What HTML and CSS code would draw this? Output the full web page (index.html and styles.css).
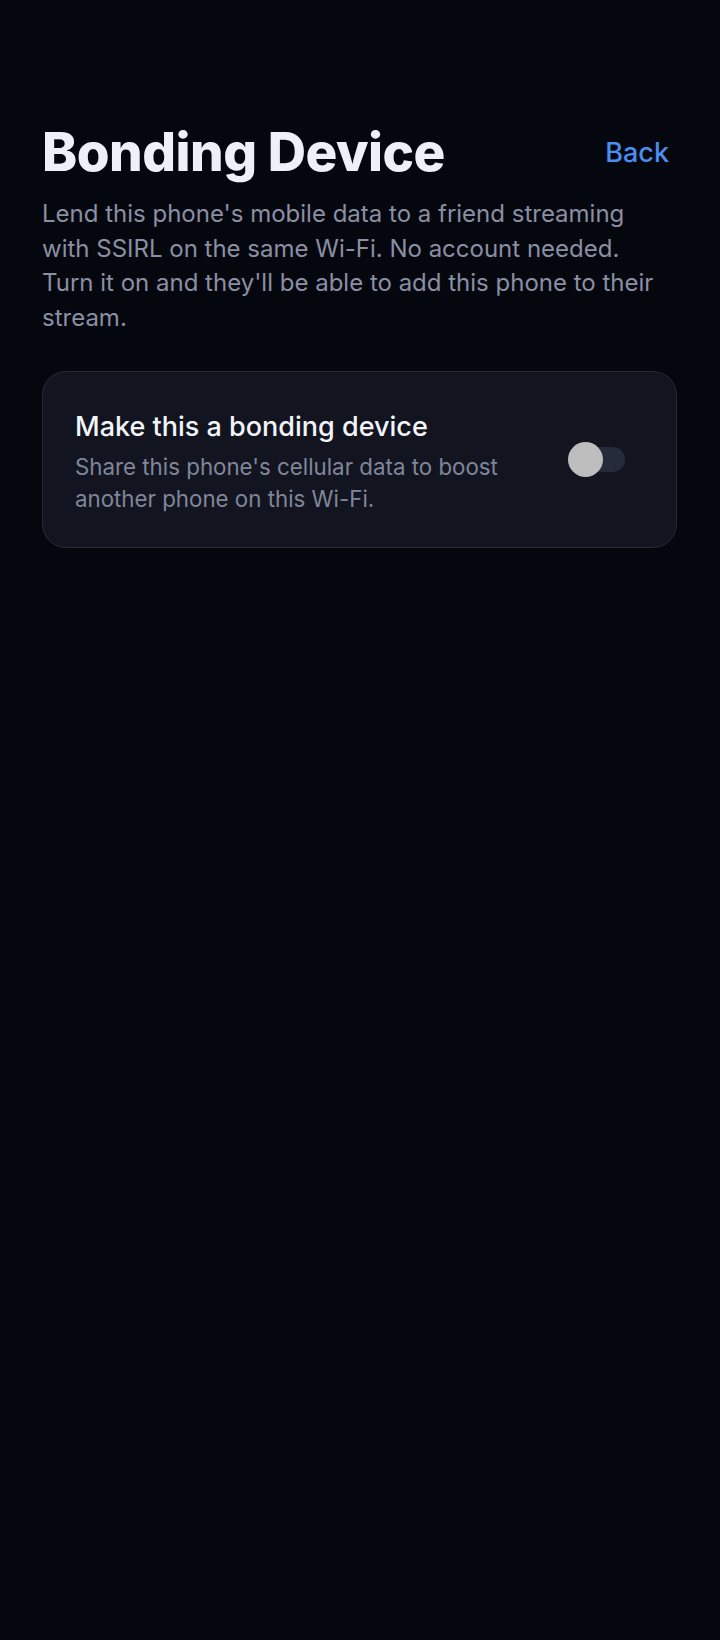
FILE: index.html
```html
<!DOCTYPE html>
<html lang="en">
<head>
<meta charset="utf-8">
<title>Bonding Device</title>
<link rel="stylesheet" href="styles.css">
</head>
<body>
<main class="page">
  <header class="header">
    <h1 class="title">Bonding Device</h1>
    <a class="back" href="#">Back</a>
  </header>
  <p class="intro">Lend this phone's mobile data to a friend streaming with SSIRL on the same Wi-Fi. No account needed. Turn it on and they'll be able to add this phone to their stream.</p>
  <section class="card">
    <div class="card-text">
      <h2 class="card-title">Make this a bonding device</h2>
      <p class="card-sub">Share this phone's cellular data to boost another phone on this Wi-Fi.</p>
    </div>
    <div class="switch" role="switch" aria-checked="false">
      <span class="switch-track"></span>
      <span class="switch-knob"></span>
    </div>
  </section>
</main>
</body>
</html>
```

FILE: styles.css
```css
html, body {
  margin: 0;
  padding: 0;
  background: #05070f;
}

body {
  min-height: 1640px;
  font-family: Inter, "Noto Sans", "Liberation Sans", sans-serif;
  color: #eef0f8;
}

.page {
  padding: 122px 43px 0 42px;
}

.header {
  display: flex;
  align-items: flex-start;
  justify-content: space-between;
}

.title {
  margin: 0;
  font-size: 53px;
  line-height: 60px;
  font-weight: 800;
  letter-spacing: -0.5px;
  color: #eef0f8;
}

.back {
  margin: 14px 8px 0 0;
  font-size: 27px;
  line-height: 34px;
  font-weight: 500;
  color: #4a8ef0;
  text-decoration: none;
}

.intro {
  margin: 15px 0 0;
  font-size: 24px;
  line-height: 34.7px;
  font-weight: 400;
  color: #8a8fa3;
}

.card {
  margin-top: 35px;
  display: flex;
  align-items: center;
  gap: 24px;
  padding: 38px 51px 32px 32px;
  background: #121520;
  border: 1px solid #262a37;
  border-radius: 24px;
}

.card-text {
  flex: 1;
  min-width: 0;
}

.card-title {
  margin: 0;
  font-size: 27px;
  line-height: 34px;
  font-weight: 500;
  color: #f2f4f8;
}

.card-sub {
  margin: 7px 0 0;
  font-size: 22.3px;
  line-height: 32px;
  font-weight: 400;
  color: #80869a;
}

.switch {
  position: relative;
  flex: none;
  width: 57px;
  height: 35px;
  margin-bottom: 5px;
}

.switch-track {
  position: absolute;
  right: 0;
  top: 5px;
  width: 52px;
  height: 25px;
  border-radius: 13px;
  background: #262b3b;
}

.switch-knob {
  position: absolute;
  left: 0;
  top: 0;
  width: 35px;
  height: 35px;
  border-radius: 50%;
  background: #bdbdbd;
}
```
